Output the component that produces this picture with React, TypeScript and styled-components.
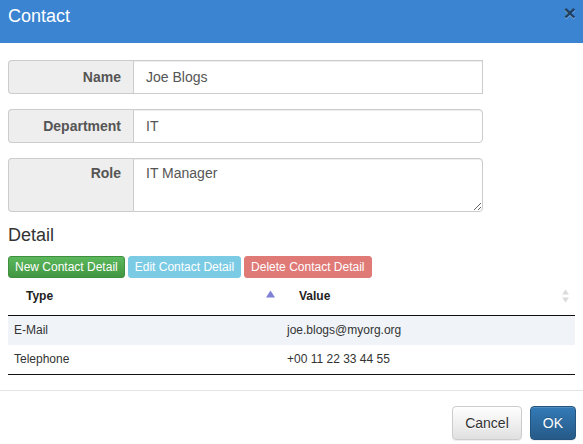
import React from "react";
import styled, { createGlobalStyle } from "styled-components";

const Global = createGlobalStyle`
  html, body { margin: 0; padding: 0; background: #fff; }
  body { font-family: "Liberation Sans", Arial, sans-serif; color: #333; font-size: 14px; }
  * { box-sizing: border-box; }
`;

const Modal = styled.div`
  width: 583px;
  background: #fff;
`;

const Header = styled.div`
  height: 43px;
  background: #3a84d1;
  display: flex;
  align-items: flex-start;
  justify-content: space-between;
  padding: 5px 7px 0 8px;
`;

const Title = styled.h4`
  margin: 0;
  font-size: 18px;
  font-weight: 500;
  line-height: 22px;
  color: #fff;
`;

const Close = styled.button`
  border: 0;
  background: transparent;
  padding: 0;
  margin-top: -3px;
  font-family: "Liberation Sans", Arial, sans-serif;
  font-size: 21px;
  font-weight: bold;
  line-height: 1;
  color: #1f4060;
  text-shadow: 0 1px 0 rgba(255, 255, 255, 0.35);
  cursor: pointer;
`;

const Body = styled.div`
  padding: 17px 8px 0 8px;
`;

const Form = styled.div`
  display: flex;
  flex-direction: column;
  gap: 15px;
  width: 475px;
`;

const Group = styled.div<{ $tall?: boolean }>`
  display: flex;
  height: ${(p) => (p.$tall ? "54px" : "34px")};
`;

const Addon = styled.label<{ $top?: boolean }>`
  width: 125px;
  flex: none;
  display: flex;
  align-items: ${(p) => (p.$top ? "flex-start" : "center")};
  justify-content: flex-end;
  padding: ${(p) => (p.$top ? "4px 12px" : "6px 12px")};
  background: #eee;
  border: 1px solid #ccc;
  border-right: 0;
  border-radius: 4px 0 0 4px;
  font-size: 14px;
  font-weight: bold;
  line-height: 20px;
  color: #555;
`;

const Input = styled.input<{ $square?: boolean }>`
  flex: 1;
  min-width: 0;
  height: 100%;
  border: 1px solid #ccc;
  border-radius: ${(p) => (p.$square ? "0" : "0 4px 4px 0")};
  padding: 6px 12px;
  font-family: "Liberation Sans", Arial, sans-serif;
  font-size: 14px;
  color: #555;
  box-shadow: inset 0 1px 1px rgba(0, 0, 0, 0.075);
  outline: none;
`;

const TextArea = styled.textarea`
  flex: 1;
  min-width: 0;
  height: 100%;
  border: 1px solid #ccc;
  border-radius: 0 4px 4px 0;
  padding: 4px 12px;
  font-family: "Liberation Sans", Arial, sans-serif;
  font-size: 14px;
  line-height: 20px;
  color: #555;
  box-shadow: inset 0 1px 1px rgba(0, 0, 0, 0.075);
  outline: none;
  resize: vertical;
`;

const Heading = styled.h4`
  margin: 14px 0 10px 0;
  font-size: 18px;
  font-weight: 500;
  line-height: 1.1;
  color: #333;
`;

const Toolbar = styled.div`
  display: flex;
  gap: 3px;
`;

const SmallBtn = styled.button<{ $bg: string; $border: string }>`
  height: 22px;
  padding: 1px 6px;
  font-family: "Liberation Sans", Arial, sans-serif;
  font-size: 12px;
  line-height: 18px;
  color: #fff;
  background: ${(p) => p.$bg};
  border: 1px solid ${(p) => p.$border};
  border-radius: 3px;
  white-space: nowrap;
`;

const Table = styled.table`
  width: 567px;
  border-collapse: collapse;
  font-size: 12px;
  color: #333;
`;

const Th = styled.th<{ $w: number }>`
  position: relative;
  width: ${(p) => p.$w}px;
  padding: 10px 18px;
  text-align: left;
  font-weight: bold;
  line-height: 17px;
  color: #222;
  border-bottom: 1px solid #111;
`;

const SortIcon = styled.svg`
  position: absolute;
  right: 5px;
  top: 50%;
  transform: translateY(-50%);
`;

const Tr = styled.tr<{ $odd?: boolean; $last?: boolean }>`
  background: ${(p) => (p.$odd ? "#f0f4f9" : "#fff")};
  border-bottom: ${(p) => (p.$last ? "1px solid #111" : "0")};
`;

const Td = styled.td`
  padding: 6px 6px;
  line-height: 17px;
  height: 29px;
`;

const Footer = styled.div`
  margin-top: 15px;
  border-top: 1px solid #e5e5e5;
  padding: 15px 7px 15px 8px;
  display: flex;
  justify-content: flex-end;
  gap: 8px;
`;

const Btn = styled.button<{ $primary?: boolean }>`
  height: 34px;
  padding: 6px 12px;
  font-family: "Liberation Sans", Arial, sans-serif;
  font-size: 14px;
  line-height: 20px;
  border-radius: 4px;
  color: ${(p) => (p.$primary ? "#fff" : "#333")};
  background: ${(p) =>
    p.$primary
      ? "linear-gradient(to bottom, #337ab7 0%, #265a88 100%)"
      : "linear-gradient(to bottom, #fff 0%, #e0e0e0 100%)"};
  border: 1px solid ${(p) => (p.$primary ? "#245580" : "#ccc")};
  box-shadow: inset 0 1px 0 rgba(255, 255, 255, 0.15), 0 1px 1px rgba(0, 0, 0, 0.075);
  text-shadow: ${(p) => (p.$primary ? "0 -1px 0 rgba(0,0,0,.2)" : "0 1px 0 #fff")};
`;

const AscIcon = () => (
  <SortIcon width="11" height="9" viewBox="0 0 11 9" style={{ marginTop: -2 }}>
    <polygon points="5.5,1 10,8 1,8" fill="#7f7fd6" />
  </SortIcon>
);

const BothIcon = () => (
  <SortIcon width="9" height="15" viewBox="0 0 9 15">
    <polygon points="4.5,1 8,6 1,6" fill="#dcdcdc" />
    <polygon points="4.5,14 8,9 1,9" fill="#dcdcdc" />
  </SortIcon>
);

const rows = [
  { type: "E-Mail", value: "joe.blogs@myorg.org" },
  { type: "Telephone", value: "+00 11 22 33 44 55" },
];

export default function App() {
  return (
    <>
      <Global />
      <Modal>
        <Header>
          <Title>Contact</Title>
          <Close aria-label="Close">×</Close>
        </Header>
        <Body>
          <Form>
            <Group>
              <Addon>Name</Addon>
              <Input $square defaultValue="Joe Blogs" />
            </Group>
            <Group>
              <Addon>Department</Addon>
              <Input defaultValue="IT" />
            </Group>
            <Group $tall>
              <Addon $top>Role</Addon>
              <TextArea defaultValue="IT Manager" />
            </Group>
          </Form>
          <Heading>Detail</Heading>
          <Toolbar>
            <SmallBtn $bg="linear-gradient(to bottom, #5cb85c 0%, #419641 100%)" $border="#3e8f3e">
              New Contact Detail
            </SmallBtn>
            <SmallBtn $bg="#7ccbe5" $border="#7ccbe5">
              Edit Contact Detail
            </SmallBtn>
            <SmallBtn $bg="#df7a77" $border="#df7a77">
              Delete Contact Detail
            </SmallBtn>
          </Toolbar>
          <Table>
            <thead>
              <tr>
                <Th $w={273}>
                  Type
                  <AscIcon />
                </Th>
                <Th $w={294}>
                  Value
                  <BothIcon />
                </Th>
              </tr>
            </thead>
            <tbody>
              {rows.map((r, i) => (
                <Tr key={r.type} $odd={i % 2 === 0} $last={i === rows.length - 1}>
                  <Td>{r.type}</Td>
                  <Td>{r.value}</Td>
                </Tr>
              ))}
            </tbody>
          </Table>
        </Body>
        <Footer>
          <Btn>Cancel</Btn>
          <Btn $primary>OK</Btn>
        </Footer>
      </Modal>
    </>
  );
}
